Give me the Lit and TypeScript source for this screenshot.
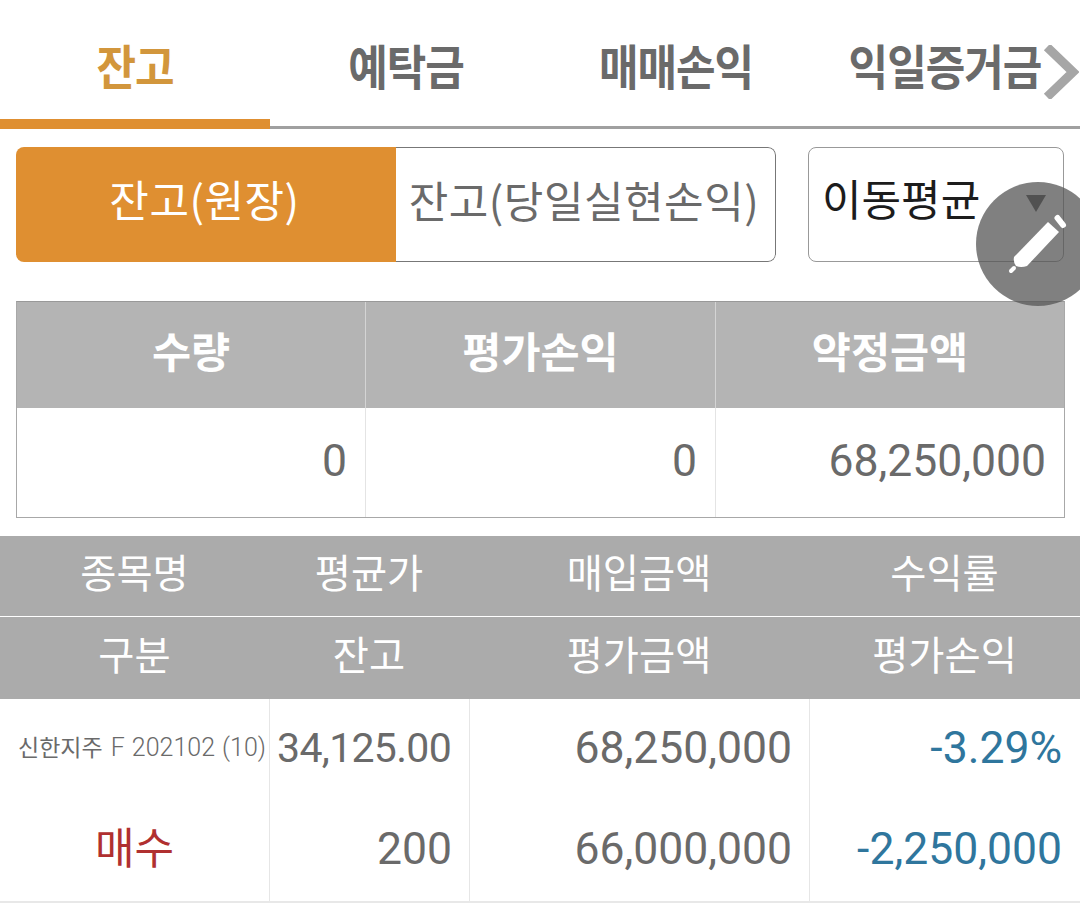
import { css, html, LitElement } from 'lit';
import { customElement } from 'lit/decorators.js';

const tabs = ['잔고', '예탁금', '매매손익', '익일증거금'];

@customElement('app-root')
export class AppRoot extends LitElement {
  static override styles = css`
    :host {
      display: block;
      position: relative;
      width: 1080px;
      height: 904px;
      overflow: hidden;
      background: #fff;
      font-family: Roboto, 'Noto Sans CJK KR', sans-serif;
      color: #6a6a6a;
    }

    .tabs {
      display: grid;
      grid-template-columns: 270px 272px 268px 270px;
      height: 129px;
      box-sizing: border-box;
      border-bottom: 3px solid #a0a0a0;
    }

    .tab {
      height: 129px;
      box-sizing: border-box;
      padding-top: 37px;
      text-align: center;
      font-size: 43px;
      line-height: 62px;
      font-weight: 700;
      letter-spacing: -1px;
      white-space: nowrap;
    }

    .tab span {
      display: inline-block;
      transform: scaleY(1.1);
    }

    .tab.active {
      color: #d2963c;
      border-bottom: 10px solid #df8f31;
    }

    .chevron {
      position: absolute;
      left: 1043px;
      top: 45px;
    }

    .filters {
      display: flex;
      padding: 18px 16px 0;
      height: 115px;
    }

    .segment {
      display: flex;
      width: 760px;
      height: 115px;
      border-radius: 8px;
      overflow: hidden;
      font-family: 'Noto Sans CJK KR', sans-serif;
      font-size: 43px;
      line-height: 102px;
      letter-spacing: 0.5px;
      text-align: center;
      white-space: nowrap;
    }

    .segment div {
      box-sizing: border-box;
      padding-right: 3px;
    }

    .segment .on {
      flex: 0 0 380px;
      background: #df8f31;
      color: #fff;
    }

    .segment .off {
      flex: 1;
      border: 1px solid #777;
      border-left: 0;
      border-radius: 0 8px 8px 0;
    }

    .select {
      display: flex;
      justify-content: space-between;
      margin-left: 32px;
      width: 256px;
      height: 115px;
      box-sizing: border-box;
      border: 1px solid #999;
      border-radius: 8px;
      padding: 0 17px 0 13px;
      color: #1c1c1c;
      font-size: 43px;
      line-height: 106px;
    }

    .arrow {
      margin-top: 47px;
      width: 0;
      height: 0;
      border-left: 10px solid transparent;
      border-right: 10px solid transparent;
      border-top: 17px solid #444;
    }

    .fab {
      position: absolute;
      left: 976px;
      top: 182px;
      width: 124px;
      height: 124px;
      border-radius: 50%;
      background: rgba(85, 85, 85, 0.75);
    }

    .fab svg {
      display: block;
    }

    .summary {
      margin: 39px 15px 0 16px;
      border: 1px solid #a8a8a8;
      border-top: 1px solid #999;
    }

    .summary-row {
      display: grid;
      grid-template-columns: 348px 350px 1fr;
    }

    .summary-head div {
      height: 106px;
      background: #b4b4b4;
      border-left: 1px solid #d4d4d4;
      color: #fff;
      font-size: 42.5px;
      font-weight: 700;
      line-height: 104px;
      text-align: center;
    }

    .summary-head div:first-child,
    .summary-body div:first-child {
      border-left: 0;
    }

    .summary-body div {
      height: 109px;
      box-sizing: border-box;
      border-left: 1px solid #e4e4e4;
      padding-right: 18px;
      font-size: 44.5px;
      line-height: 106px;
      text-align: right;
    }

    .list {
      margin-top: 18px;
    }

    .list-head {
      display: grid;
      grid-template-columns: 269px 200px 340px 271px;
      height: 80px;
      background: #ababab;
      color: #fff;
      font-size: 39.3px;
      line-height: 78px;
      text-align: center;
    }

    .list-head.second {
      height: 82px;
      margin-top: 1px;
      line-height: 80px;
    }

    .list-row {
      display: grid;
      grid-template-columns: 269px 200px 340px 271px;
    }

    .list-row > div {
      height: 101px;
      box-sizing: border-box;
      border-left: 1px solid #e6e6e6;
      padding-right: 17px;
      font-size: 44.5px;
      line-height: 98px;
      text-align: right;
      white-space: nowrap;
    }

    .list-row > .price {
      padding-right: 18px;
      font-size: 41px;
      letter-spacing: -0.7px;
    }

    .list-row > .name {
      border-left: 0;
      padding: 0 0 0 18px;
      font-size: 23px;
      text-align: left;
    }

    .name span {
      margin-left: 8px;
      font-size: 25px;
      font-weight: 300;
      word-spacing: 1px;
    }

    .list-row > .side {
      border-left: 0;
      padding: 0;
      color: #b03030;
      font-size: 43px;
      text-align: center;
    }

    .list-row > .loss {
      padding-right: 18px;
      color: #2f769d;
    }

    .list-end {
      height: 2px;
      background: #e8e8e8;
    }
  `;

  protected override render() {
    return html`
      <div class="tabs">
        ${tabs.map(
          (t, i) =>
            html`<div class="tab ${i === 0 ? 'active' : ''}"><span>${t}</span></div>`
        )}
      </div>
      <svg class="chevron" width="36" height="54" viewBox="0 0 36 54">
        <path
          d="M4 2 L30 27 L4 52"
          fill="none"
          stroke="#a6a6a6"
          stroke-width="9"
        />
      </svg>

      <div class="filters">
        <div class="segment">
          <div class="on">잔고(원장)</div>
          <div class="off">잔고(당일실현손익)</div>
        </div>
        <div class="select">
          <span>이동평균</span>
          <span class="arrow"></span>
        </div>
      </div>
      <div class="fab">
        <svg width="104" height="124" viewBox="0 0 104 124">
          <path
            d="M72 40 L83 50 L51 84 Q45 86 40 84 Q37 80 38 75 Z"
            fill="#fff"
          />
          <path
            d="M35 89 L38 86"
            stroke="#fff"
            stroke-width="4"
            stroke-linecap="round"
          />
          <path
            d="M81.5 36 L87 43"
            stroke="#fff"
            stroke-width="6"
            stroke-linecap="round"
          />
        </svg>
      </div>

      <div class="summary">
        <div class="summary-row summary-head">
          <div>수량</div>
          <div>평가손익</div>
          <div>약정금액</div>
        </div>
        <div class="summary-row summary-body">
          <div>0</div>
          <div>0</div>
          <div>68,250,000</div>
        </div>
      </div>

      <div class="list">
        <div class="list-head">
          <div>종목명</div>
          <div>평균가</div>
          <div>매입금액</div>
          <div>수익률</div>
        </div>
        <div class="list-head second">
          <div>구분</div>
          <div>잔고</div>
          <div>평가금액</div>
          <div>평가손익</div>
        </div>
        <div class="list-row">
          <div class="name">신한지주<span>F 202102 (10)</span></div>
          <div class="price">34,125.00</div>
          <div>68,250,000</div>
          <div class="loss">-3.29%</div>
        </div>
        <div class="list-row">
          <div class="side">매수</div>
          <div>200</div>
          <div>66,000,000</div>
          <div class="loss">-2,250,000</div>
        </div>
        <div class="list-end"></div>
      </div>
    `;
  }
}
